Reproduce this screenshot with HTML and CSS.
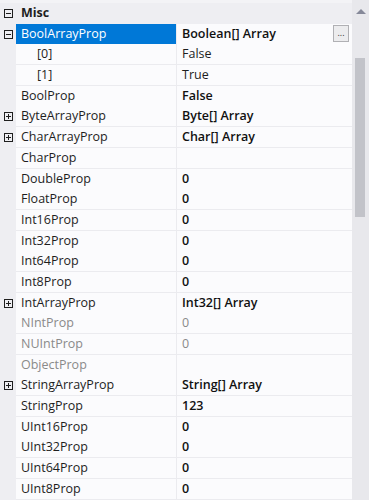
FILE: index.html
```html
<!DOCTYPE html>
<html lang="en">
<head>
    <meta charset="UTF-8">
    <title>PropertyGrid</title>
    <link rel="stylesheet" href="styles.css">
</head>
<body>
    <div class="grid">
        <div class="props">
            <div class="row category">
                <div class="margin"><svg class="box" width="9" height="9"><rect x="0.5" y="0.5" width="8" height="8"/><path d="M2 4.5h5"/></svg></div>
                <div class="cat-name">Misc</div>
            </div>
            <div class="row">
                <div class="margin"><svg class="box" width="9" height="9"><rect x="0.5" y="0.5" width="8" height="8"/><path d="M2 4.5h5"/></svg></div>
                <div class="label selected">BoolArrayProp</div>
                <div class="value bold">Boolean[] Array<span class="dots">...</span></div>
            </div>
            <div class="row">
                <div class="margin"></div>
                <div class="label sub">[0]</div>
                <div class="value">False</div>
            </div>
            <div class="row">
                <div class="margin"></div>
                <div class="label sub">[1]</div>
                <div class="value">True</div>
            </div>
            <div class="row">
                <div class="margin"></div>
                <div class="label">BoolProp</div>
                <div class="value bold">False</div>
            </div>
            <div class="row">
                <div class="margin"><svg class="box" width="9" height="9"><rect x="0.5" y="0.5" width="8" height="8"/><path d="M2 4.5h5M4.5 2v5"/></svg></div>
                <div class="label">ByteArrayProp</div>
                <div class="value bold">Byte[] Array</div>
            </div>
            <div class="row">
                <div class="margin"><svg class="box" width="9" height="9"><rect x="0.5" y="0.5" width="8" height="8"/><path d="M2 4.5h5M4.5 2v5"/></svg></div>
                <div class="label">CharArrayProp</div>
                <div class="value bold">Char[] Array</div>
            </div>
            <div class="row">
                <div class="margin"></div>
                <div class="label">CharProp</div>
                <div class="value"></div>
            </div>
            <div class="row">
                <div class="margin"></div>
                <div class="label">DoubleProp</div>
                <div class="value bold">0</div>
            </div>
            <div class="row">
                <div class="margin"></div>
                <div class="label">FloatProp</div>
                <div class="value bold">0</div>
            </div>
            <div class="row">
                <div class="margin"></div>
                <div class="label">Int16Prop</div>
                <div class="value bold">0</div>
            </div>
            <div class="row">
                <div class="margin"></div>
                <div class="label">Int32Prop</div>
                <div class="value bold">0</div>
            </div>
            <div class="row">
                <div class="margin"></div>
                <div class="label">Int64Prop</div>
                <div class="value bold">0</div>
            </div>
            <div class="row">
                <div class="margin"></div>
                <div class="label">Int8Prop</div>
                <div class="value bold">0</div>
            </div>
            <div class="row">
                <div class="margin"><svg class="box" width="9" height="9"><rect x="0.5" y="0.5" width="8" height="8"/><path d="M2 4.5h5M4.5 2v5"/></svg></div>
                <div class="label">IntArrayProp</div>
                <div class="value bold">Int32[] Array</div>
            </div>
            <div class="row disabled">
                <div class="margin"></div>
                <div class="label">NIntProp</div>
                <div class="value">0</div>
            </div>
            <div class="row disabled">
                <div class="margin"></div>
                <div class="label">NUIntProp</div>
                <div class="value">0</div>
            </div>
            <div class="row disabled">
                <div class="margin"></div>
                <div class="label">ObjectProp</div>
                <div class="value"></div>
            </div>
            <div class="row">
                <div class="margin"><svg class="box" width="9" height="9"><rect x="0.5" y="0.5" width="8" height="8"/><path d="M2 4.5h5M4.5 2v5"/></svg></div>
                <div class="label">StringArrayProp</div>
                <div class="value bold">String[] Array</div>
            </div>
            <div class="row">
                <div class="margin"></div>
                <div class="label">StringProp</div>
                <div class="value bold">123</div>
            </div>
            <div class="row">
                <div class="margin"></div>
                <div class="label">UInt16Prop</div>
                <div class="value bold">0</div>
            </div>
            <div class="row">
                <div class="margin"></div>
                <div class="label">UInt32Prop</div>
                <div class="value bold">0</div>
            </div>
            <div class="row">
                <div class="margin"></div>
                <div class="label">UInt64Prop</div>
                <div class="value bold">0</div>
            </div>
            <div class="row">
                <div class="margin"></div>
                <div class="label">UInt8Prop</div>
                <div class="value bold">0</div>
            </div>
        </div>
        <div class="scrollbar">
            <div class="arrow"></div>
            <div class="thumb"></div>
        </div>
    </div>
</body>
</html>
```

FILE: styles.css
```css
body {
    margin: 0;
    font-family: "Open Sans", "Noto Sans", sans-serif;
    font-size: 12.5px;
    color: #1e1e1e;
    background: #f0f0f3;
    overflow: hidden;
}
.grid {
    display: flex;
    height: 500px;
}
.props {
    flex: 1;
    padding-top: 3px;
    background: #f3f3f6;
}
.row {
    display: grid;
    grid-template-columns: 16px 161px 1fr;
    height: 20.7px;
    line-height: 20px;
}
.margin {
    background: #eeeef2;
    display: flex;
    align-items: center;
    justify-content: center;
}
.box {
    display: block;
    margin-left: 1px;
    fill: none;
    stroke: #1e1e1e;
    stroke-width: 1;
}
.category {
    background: #eeeef2;
}
.cat-name {
    grid-column: 2 / 4;
    padding-left: 5px;
    font-weight: bold;
}
.label {
    padding-left: 5px;
    background: #fbfbfd;
    border-bottom: 1px solid #ebebef;
    border-right: 1px solid #ebebef;
    white-space: nowrap;
}
.label.sub {
    padding-left: 21px;
}
.label.selected {
    background: #0078d7;
    color: #fff;
    border-bottom-color: #0078d7;
}
.value {
    position: relative;
    padding-left: 5px;
    background: #fbfbfd;
    border-bottom: 1px solid #ebebef;
    white-space: nowrap;
}
.bold {
    font-weight: 600;
    color: #111;
}
.disabled {
    color: #8a8a8a;
}
.dots {
    position: absolute;
    right: 3px;
    top: 1px;
    width: 14px;
    height: 15px;
    border: 1px solid #b0b0b4;
    background: #ececee;
    font-size: 9px;
    line-height: 13px;
    text-align: center;
    font-weight: normal;
    color: #333;
}
.scrollbar {
    width: 17px;
    background: #e8e8ec;
    position: relative;
}
.arrow {
    margin: 9px auto 0;
    width: 0;
    height: 0;
    border-left: 5px solid transparent;
    border-right: 5px solid transparent;
    border-bottom: 5px solid #868999;
}
.thumb {
    position: absolute;
    left: 3px;
    top: 58px;
    width: 10px;
    height: 159px;
    background: #c2c3c9;
}
```
